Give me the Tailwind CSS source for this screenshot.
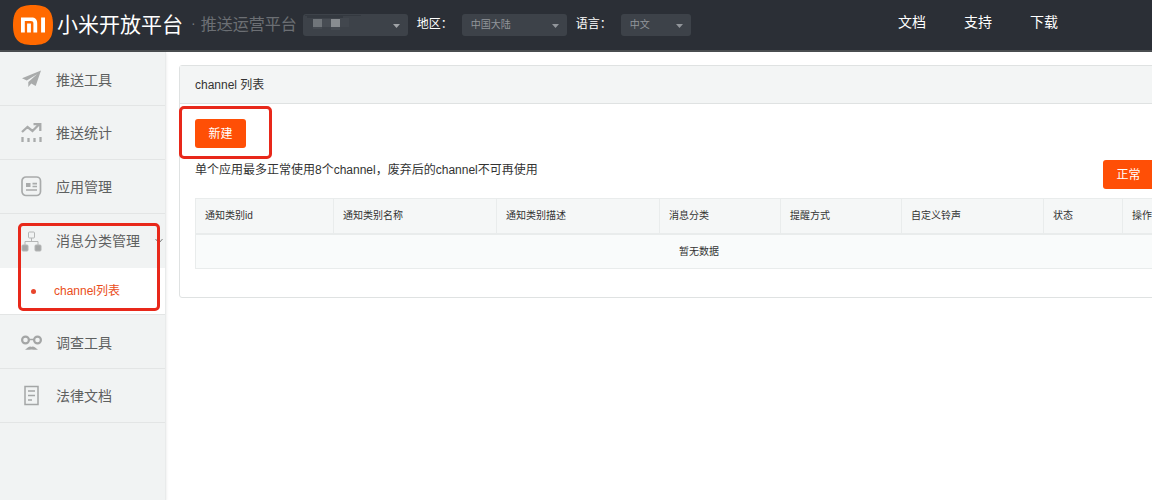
<!DOCTYPE html>
<html lang="zh-CN">
<head>
<meta charset="utf-8">
<title>小米开放平台</title>
<script src="https://cdn.jsdelivr.net/npm/@tailwindcss/browser@4"></script>
</head>
<body class="flex min-h-screen flex-col overflow-x-hidden bg-white font-['Liberation_Sans','Noto_Sans_CJK_SC',sans-serif] text-xs text-[#333333]">
<header class="flex h-[52px] shrink-0 items-center border-b-2 border-[#4a4d50] bg-[#2b2f36] pl-[13px] pr-[94px] whitespace-nowrap text-white">
  <svg class="size-10 shrink-0" viewBox="0 0 40 40" role="img" aria-label="小米">
    <path fill="#ff6900" d="M20 0C33 0 40 4 40 20S33 40 20 40 0 36 0 20 7 0 20 0Z"/>
    <path fill="#fff" d="M8 12.500h10.500c3.800 0 5.700 2 5.700 5.500v9.500h-3.800V18.300c0-1.600-.9-2.400-2.600-2.400h-6v11.600H8zM14.100 18.500h3.800v9h-3.800zM28.100 12.500H32v15h-3.900z"/>
  </svg>
  <h1 class="ml-1 mb-[2px] text-[21px] leading-none">小米开放平台</h1>
  <span class="ml-2 mb-1 text-sm text-[#74777b]">·</span>
  <span class="ml-[5px] text-base leading-none text-[#6c6f74]">推送运营平台</span>
  <div class="relative ml-[6px] text-[#a0a3a7]">
    <select aria-label="应用" class="block h-[22px] w-[105px] appearance-none rounded-[3px] bg-[#3d4249] px-[9px] text-[10px]"><option></option></select>
    <svg class="pointer-events-none absolute left-0 top-0 h-[22px] w-16" viewBox="0 0 64 22">
      <path fill="#343940" d="M2 1h56v1H40v2H4V2H2z"/>
      <path fill="#70757a" d="M10 5h9v8h-9z"/><path fill="#484d54" d="M19 5h9v8h-9z"/><path fill="#888c90" d="M28 5h9v8h-9z"/><path fill="#454a51" d="M10 13h9v2h-9zM28 13h9v3h-9z"/><path fill="#42474e" d="M37 4h9v9h-9z"/>
    </svg>
    <svg class="pointer-events-none absolute right-2 top-[10px] h-1 w-[7px]" viewBox="0 0 7 4"><path fill="currentColor" d="M0 0h7L3.500 4z"/></svg>
  </div>
  <label for="region" class="ml-[9px] mb-[2px]">地区：</label>
  <div class="relative ml-[9px] text-[#92969b]">
    <select id="region" class="block h-[22px] w-[105px] appearance-none rounded-[3px] bg-[#3d4249] px-[9px] text-[10px]"><option>中国大陆</option></select>
    <svg class="pointer-events-none absolute right-2 top-[10px] h-1 w-[7px]" viewBox="0 0 7 4"><path fill="currentColor" d="M0 0h7L3.500 4z"/></svg>
  </div>
  <label for="language" class="ml-[9px] mb-[2px]">语言：</label>
  <div class="relative ml-[9px] text-[#92969b]">
    <select id="language" class="block h-[22px] w-[70px] appearance-none rounded-[3px] bg-[#3d4249] px-[9px] text-[10px]"><option>中文</option></select>
    <svg class="pointer-events-none absolute right-2 top-[10px] h-1 w-[7px]" viewBox="0 0 7 4"><path fill="currentColor" d="M0 0h7L3.500 4z"/></svg>
  </div>
  <nav class="ml-auto mb-[6px] flex gap-[38px] text-sm">
    <a href="#">文档</a><a href="#">支持</a><a href="#">下载</a>
  </nav>
</header>

<div class="flex grow">
  <aside class="w-[166px] shrink-0 border-r border-[#e9ebeb] bg-[#f1f3f3] text-sm text-[#5e6060] shadow-sm">
    <nav>
      <a href="#" class="flex h-[54px] items-center gap-[14px] border-b border-[#e3e5e5] pl-[21px] pt-[2px]">
        <svg class="size-[21px]" viewBox="0 0 21 21" fill="#a9abab"><path d="M20 1.500 1 9.200l4.800 2.400L16 5.200 7.300 13v5l3-3.500 4.400 2.600z"/></svg>推送工具</a>
      <a href="#" class="flex h-[54px] items-center gap-[14px] border-b border-[#e3e5e5] pl-[21px]">
        <svg class="size-[21px]" viewBox="0 0 21 21" fill="none" stroke="#a9abab" stroke-width="2.300"><path d="m1 10 5.500-5 5 4 6.500-6.500M12.500 2.200h6.800V9M1.500 15v5M7.500 16v4M13.500 16v4M19.500 15v5"/></svg>推送统计</a>
      <a href="#" class="flex h-[54px] items-center gap-[14px] border-b border-[#e3e5e5] pl-[21px]">
        <svg class="size-[21px]" viewBox="0 0 21 21" fill="none" stroke="#a9abab" stroke-width="1.700"><rect x="1" y="1" width="18.500" height="18.500" rx="4"/><path fill="#a9abab" stroke="none" d="M5 7h4.500v4H5z"/><path d="M11.500 7.700H16M11.500 10.500H16M5 14h11"/></svg>应用管理</a>
      <a href="#" class="relative flex h-[54px] items-center gap-[14px] pl-[21px]">
        <svg class="size-[21px]" viewBox="0 0 21 21" fill="none" stroke="#b4b6b6"><rect x="7.500" y="1" width="6" height="6" rx="1"/><path d="M10.500 7v3.500M4 14v-3.500h13V14"/><rect x="1" y="14" width="6" height="6" rx="1" fill="#a4a6a6"/><rect x="14" y="14" width="6" height="6" rx="1" fill="#a4a6a6"/></svg>消息分类管理
        <svg class="absolute right-[2px] top-6 h-[6px] w-2" viewBox="0 0 8 6" fill="none" stroke="#777"><path d="m.500 1 3.500 4 3.500-4"/></svg>
        <span class="pointer-events-none absolute left-[18px] top-[9px] z-10 h-[88px] w-[142px] rounded-[5px] border-[3px] border-[#e8281a]"></span>
      </a>
      <a href="#" class="flex h-[46px] items-center bg-white pl-[31px] text-xs text-[#ea4d20]"><span class="mr-[18px] size-[5px] rounded-full bg-[#e8452c]"></span>channel列表</a>
      <a href="#" class="flex h-[55px] items-center gap-[14px] border-y border-[#e3e5e5] pl-[21px] pt-[2px]">
        <svg class="size-[21px]" viewBox="0 0 21 21" fill="none" stroke="#a4a6a6" stroke-width="2.200"><circle cx="4.500" cy="8" r="3.400"/><circle cx="16.500" cy="8" r="3.400"/><path d="M8 7.500h5" stroke-width="1.500"/><path fill="#a4a6a6" stroke="none" d="M4 17.500c2-.5 3-3 5-3 .8 0 1 .4 1.500.4s.7-.4 1.500-.4c2 0 3 2.500 5 3-2 .4-4 .2-6.500 0-2.500.2-4.500.4-6.500 0z"/></svg>调查工具</a>
      <a href="#" class="flex h-[54px] items-center gap-[14px] border-b border-[#e3e5e5] pl-[21px]">
        <svg class="size-[21px]" viewBox="0 0 21 21" fill="none" stroke="#a4a6a6" stroke-width="1.500"><path d="M4 1.500h13v18H4zM7 6h7M7 10.500h7M7 15h4"/></svg>法律文档</a>
    </nav>
  </aside>

  <main class="min-w-0 grow overflow-hidden pl-[13px] pt-[13px]">
    <section class="w-full min-w-[1040px] rounded-[3px] border border-[#dfe2e2]">
      <h2 class="flex h-[38px] items-center border-b border-[#dfe2e2] bg-[#f3f5f5] px-[15px]">channel 列表</h2>
      <div class="px-[15px] pb-7 pt-[15px]">
        <div class="relative flex">
          <button type="button" class="h-[29px] w-[51px] rounded-[3px] bg-[#ff4f06] text-white">新建</button>
          <span class="pointer-events-none absolute -left-4 -top-[13px] h-[53px] w-[93px] rounded-[5px] border-[3px] border-[#e8281a]"></span>
        </div>
        <div class="mt-3 flex items-start justify-between pr-[49px]">
          <p class="leading-5">单个应用最多正常使用8个channel，废弃后的channel不可再使用</p>
          <button type="button" class="h-[29px] w-[51px] rounded-[3px] bg-[#ff4f06] text-white">正常</button>
        </div>
        <table class="mt-[9px] w-full table-fixed border-collapse border border-[#e9ecec] text-left text-[10px]">
          <colgroup><col class="w-[138px]"><col class="w-[163px]"><col class="w-[163px]"><col class="w-[121px]"><col class="w-[121px]"><col class="w-[142px]"><col class="w-[79px]"><col></colgroup>
          <thead class="border-b-2 border-[#e9ecec] bg-[#f5f7f7]">
            <tr class="h-[35px] *:border-r *:border-[#e9ecec] *:px-[9px] *:font-normal">
              <th>通知类别id</th><th>通知类别名称</th><th>通知类别描述</th><th>消息分类</th><th>提醒方式</th><th>自定义铃声</th><th>状态</th><th>操作</th>
            </tr>
          </thead>
          <tbody class="bg-[#f9fbfb]"><tr class="h-[35px]"><td colspan="8" class="text-center">暂无数据</td></tr></tbody>
        </table>
      </div>
    </section>
  </main>
</div>
</body>
</html>
